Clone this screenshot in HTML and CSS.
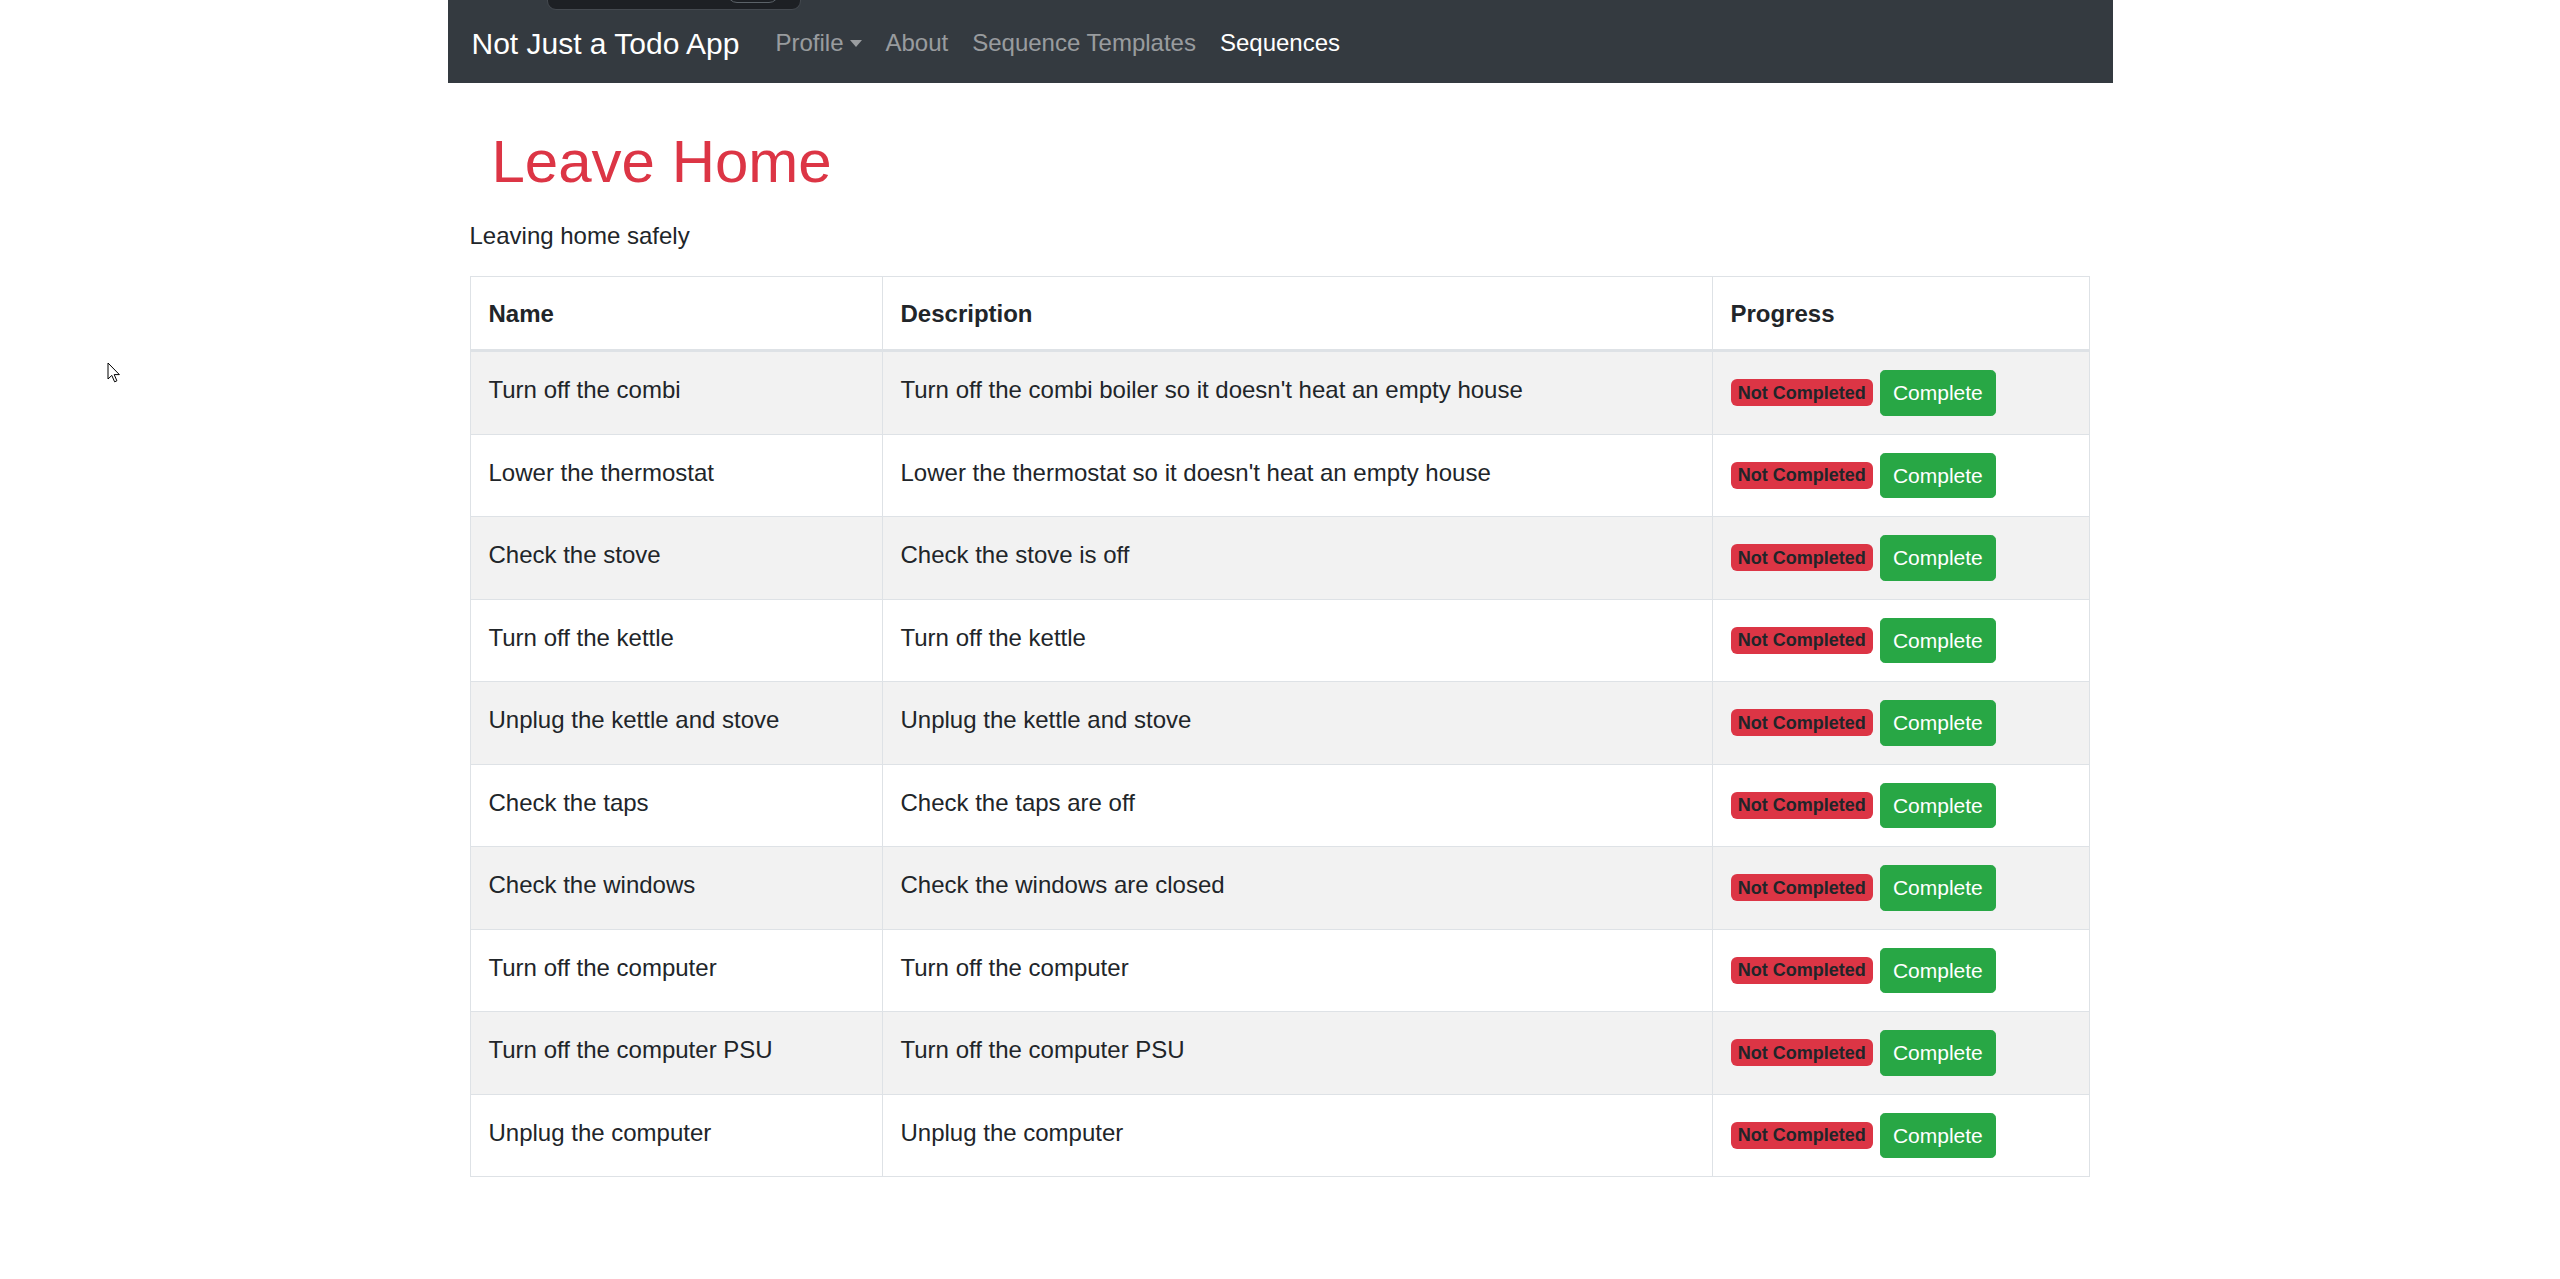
FILE: index.html
```html
<!DOCTYPE html>
<html lang="en">
<head>
<meta charset="utf-8">
<title>Leave Home</title>
<link rel="stylesheet" href="styles.css">
</head>
<body>
<div class="page">
  <nav class="navbar">
    <a class="brand" href="#">Not Just a Todo App</a>
    <ul class="nav">
      <li><a class="nav-link dropdown" href="#">Profile</a></li>
      <li><a class="nav-link" href="#">About</a></li>
      <li><a class="nav-link" href="#">Sequence Templates</a></li>
      <li><a class="nav-link active" href="#">Sequences</a></li>
    </ul>
  </nav>
  <main class="content">
    <h1 class="title">Leave Home</h1>
    <p class="lead-text">Leaving home safely</p>
    <table class="steps">
      <colgroup>
        <col class="col-name">
        <col class="col-desc">
        <col class="col-prog">
      </colgroup>
      <thead>
        <tr><th>Name</th><th>Description</th><th>Progress</th></tr>
      </thead>
      <tbody>
        <tr><td>Turn off the combi</td><td>Turn off the combi boiler so it doesn't heat an empty house</td><td><div class="prog"><span class="badge">Not Completed</span><button class="btn">Complete</button></div></td></tr>
        <tr><td>Lower the thermostat</td><td>Lower the thermostat so it doesn't heat an empty house</td><td><div class="prog"><span class="badge">Not Completed</span><button class="btn">Complete</button></div></td></tr>
        <tr><td>Check the stove</td><td>Check the stove is off</td><td><div class="prog"><span class="badge">Not Completed</span><button class="btn">Complete</button></div></td></tr>
        <tr><td>Turn off the kettle</td><td>Turn off the kettle</td><td><div class="prog"><span class="badge">Not Completed</span><button class="btn">Complete</button></div></td></tr>
        <tr><td>Unplug the kettle and stove</td><td>Unplug the kettle and stove</td><td><div class="prog"><span class="badge">Not Completed</span><button class="btn">Complete</button></div></td></tr>
        <tr><td>Check the taps</td><td>Check the taps are off</td><td><div class="prog"><span class="badge">Not Completed</span><button class="btn">Complete</button></div></td></tr>
        <tr><td>Check the windows</td><td>Check the windows are closed</td><td><div class="prog"><span class="badge">Not Completed</span><button class="btn">Complete</button></div></td></tr>
        <tr><td>Turn off the computer</td><td>Turn off the computer</td><td><div class="prog"><span class="badge">Not Completed</span><button class="btn">Complete</button></div></td></tr>
        <tr><td>Turn off the computer PSU</td><td>Turn off the computer PSU</td><td><div class="prog"><span class="badge">Not Completed</span><button class="btn">Complete</button></div></td></tr>
        <tr><td>Unplug the computer</td><td>Unplug the computer</td><td><div class="prog"><span class="badge">Not Completed</span><button class="btn">Complete</button></div></td></tr>
      </tbody>
    </table>
  </main>
</div>
<div class="capture-bar"><span class="capture-pill"></span></div>
<svg class="cursor" width="14" height="22" viewBox="0 0 14 22" aria-hidden="true">
  <path d="M1 1 L1 17 L4.8 13.4 L7.6 19.8 L9.9 18.8 L7.2 12.6 L12.4 12.6 Z" fill="#fff" stroke="#000" stroke-width="1" stroke-linejoin="round"/>
</svg>
</body>
</html>
```
FILE: styles.css
```css
html, body {
  margin: 0;
  padding: 0;
  background: #fff;
}
body {
  font-family: "Liberation Sans", Arial, sans-serif;
  font-size: 24px;
  line-height: 1.5;
  color: #212529;
  position: relative;
  min-height: 1279px;
}
.page {
  width: 1665px;
  margin: 0 auto;
}
.navbar {
  height: 83px;
  background: #343a40;
  display: flex;
  align-items: center;
  padding: 3px 24px 0 24px;
  box-sizing: border-box;
}
.brand {
  font-size: 30px;
  line-height: 1.5;
  color: #fff;
  text-decoration: none;
  margin-right: 24px;
  white-space: nowrap;
}
.nav {
  list-style: none;
  margin: 0;
  padding: 0;
  display: flex;
}
.nav-link {
  display: block;
  padding: 12px 12px;
  color: rgba(255, 255, 255, 0.5);
  text-decoration: none;
  white-space: nowrap;
}
.nav-link.active {
  color: #fff;
}
.dropdown::after {
  content: "";
  display: inline-block;
  margin-left: 6px;
  vertical-align: 4px;
  border-top: 7px solid;
  border-right: 6px solid transparent;
  border-left: 6px solid transparent;
}
.content {
  padding: 43px 24px 40px 22px;
}
.title {
  margin: 0 0 20px 0;
  padding-left: 22px;
  font-size: 60px;
  font-weight: 400;
  line-height: 1.2;
  color: #dc3545;
}
.lead-text {
  margin: 0 0 22px 0;
}
.steps {
  width: 1619px;
  border-collapse: collapse;
  table-layout: fixed;
}
.col-name { width: 412px; }
.col-desc { width: 830px; }
.col-prog { width: 377px; }
.steps th,
.steps td {
  border: 1px solid #dee2e6;
  padding: 18px 18px;
  text-align: left;
  vertical-align: top;
}
.steps th {
  font-weight: 700;
  padding-top: 19px;
  padding-bottom: 17px;
  border-bottom: 3px solid #dee2e6;
}
.steps td {
  padding-top: 20px;
  padding-bottom: 18px;
}
.steps tbody tr:nth-child(odd) {
  background: #f2f2f2;
}
.prog {
  display: flex;
  align-items: center;
  gap: 7px;
  margin-top: -2px;
}
.badge {
  display: inline-block;
  background: #dc3545;
  color: #212529;
  font-size: 18px;
  font-weight: 700;
  line-height: 1;
  padding: 4.5px 7.2px;
  border-radius: 6px;
  white-space: nowrap;
}
.btn {
  font-family: "Liberation Sans", Arial, sans-serif;
  font-size: 21px;
  line-height: 1.5;
  height: 45.5px;
  padding: 0 12px;
  color: #fff;
  background: #28a745;
  border: 1px solid #28a745;
  border-radius: 4.8px;
  cursor: pointer;
}
.capture-bar {
  position: absolute;
  left: 547px;
  top: -12px;
  width: 254px;
  height: 22px;
  background: #1d2024;
  border: 1px solid #44494f;
  border-radius: 9px;
  box-sizing: border-box;
  overflow: hidden;
}
.capture-pill {
  position: absolute;
  left: 179px;
  top: -6px;
  width: 52px;
  height: 20px;
  border: 1px solid #5b6268;
  border-radius: 10px;
  box-sizing: border-box;
}
.cursor {
  position: absolute;
  left: 107px;
  top: 362px;
}
```
